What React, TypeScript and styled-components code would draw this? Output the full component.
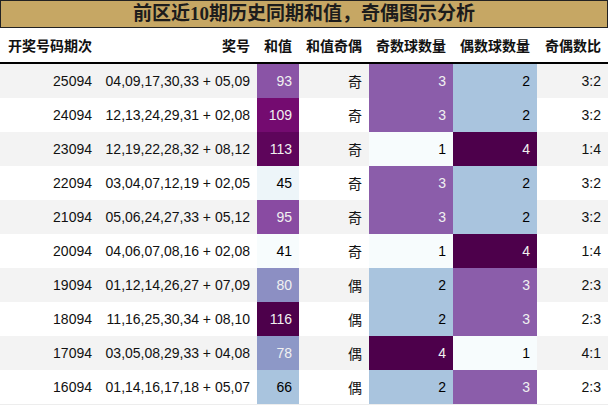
import React from 'react';
import styled, { createGlobalStyle } from 'styled-components';

interface Draw {
  issue: string;
  front: string;
  back: string;
  sum: number;
  odd: number;
  even: number;
}

const draws: Draw[] = [
  { issue: '25094', front: '04,09,17,30,33', back: '05,09', sum: 93, odd: 3, even: 2 },
  { issue: '24094', front: '12,13,24,29,31', back: '02,08', sum: 109, odd: 3, even: 2 },
  { issue: '23094', front: '12,19,22,28,32', back: '08,12', sum: 113, odd: 1, even: 4 },
  { issue: '22094', front: '03,04,07,12,19', back: '02,05', sum: 45, odd: 3, even: 2 },
  { issue: '21094', front: '05,06,24,27,33', back: '05,12', sum: 95, odd: 3, even: 2 },
  { issue: '20094', front: '04,06,07,08,16', back: '02,08', sum: 41, odd: 1, even: 4 },
  { issue: '19094', front: '01,12,14,26,27', back: '07,09', sum: 80, odd: 2, even: 3 },
  { issue: '18094', front: '11,16,25,30,34', back: '08,10', sum: 116, odd: 2, even: 3 },
  { issue: '17094', front: '03,05,08,29,33', back: '04,08', sum: 78, odd: 4, even: 1 },
  { issue: '16094', front: '01,14,16,17,18', back: '05,07', sum: 66, odd: 2, even: 3 },
];

// BuPu colour map stops
const BUPU = ['#f7fcfd', '#e0ecf4', '#bfd3e6', '#9ebcda', '#8c96c6', '#8c6bb1', '#88419d', '#810f7c', '#4d004b'];

const hexToRgb = (h: string) => [1, 3, 5].map((i) => parseInt(h.slice(i, i + 2), 16));

const bupu = (t: number) => {
  const x = Math.min(1, Math.max(0, t)) * (BUPU.length - 1);
  const i = Math.min(BUPU.length - 2, Math.floor(x));
  const f = x - i;
  const a = hexToRgb(BUPU[i]);
  const b = hexToRgb(BUPU[i + 1]);
  return a.map((v, k) => Math.round(v + (b[k] - v) * f));
};

const luminance = (rgb: number[]) => {
  const [r, g, b] = rgb.map((v) => {
    const c = v / 255;
    return c <= 0.03928 ? c / 12.92 : ((c + 0.055) / 1.055) ** 2.4;
  });
  return 0.2126 * r + 0.7152 * g + 0.0722 * b;
};

const gradient = (value: number, min: number, max: number) => {
  const rgb = bupu((value - min) / (max - min));
  return {
    bg: `rgb(${rgb.join(',')})`,
    fg: luminance(rgb) < 0.408 ? '#f1f1f1' : '#000000',
  };
};

const range = (list: number[]) => [Math.min(...list), Math.max(...list)];

export default function App() {
  const [sumMin, sumMax] = range(draws.map((d) => d.sum));
  const [oddMin, oddMax] = range(draws.map((d) => d.odd));
  const [evenMin, evenMax] = range(draws.map((d) => d.even));

  return (
    <>
      <GlobalStyle />
      <S.Wrap>
        <S.Title>前区近10期历史同期和值，奇偶图示分析</S.Title>
        <S.HeadRow>
          <S.HeadCell $left>开奖号码期次</S.HeadCell>
          <S.HeadCell>奖号</S.HeadCell>
          <S.HeadCell>和值</S.HeadCell>
          <S.HeadCell>和值奇偶</S.HeadCell>
          <S.HeadCell>奇数球数量</S.HeadCell>
          <S.HeadCell>偶数球数量</S.HeadCell>
          <S.HeadCell>奇偶数比</S.HeadCell>
        </S.HeadRow>
        {draws.map((d, index) => {
          const sum = gradient(d.sum, sumMin, sumMax);
          const odd = gradient(d.odd, oddMin, oddMax);
          const even = gradient(d.even, evenMin, evenMax);
          return (
            <S.Row key={d.issue} $striped={index % 2 === 0}>
              <S.Cell>{d.issue}</S.Cell>
              <S.Cell>
                {d.front} + {d.back}
              </S.Cell>
              <S.Cell $bg={sum.bg} $fg={sum.fg}>
                {d.sum}
              </S.Cell>
              <S.Cell>{d.sum % 2 === 1 ? '奇' : '偶'}</S.Cell>
              <S.Cell $bg={odd.bg} $fg={odd.fg}>
                {d.odd}
              </S.Cell>
              <S.Cell $bg={even.bg} $fg={even.fg}>
                {d.even}
              </S.Cell>
              <S.Cell>
                {d.odd}:{d.even}
              </S.Cell>
            </S.Row>
          );
        })}
      </S.Wrap>
    </>
  );
}

const GlobalStyle = createGlobalStyle`
  body {
    margin: 0;
    background: #ffffff;
  }
`;

const COLUMNS = '99px 158px 42px 70px 84px 84px 71px';

const S = {
  Wrap: styled.div`
    width: 608px;
    font-family: 'Liberation Sans', 'Noto Sans CJK SC', sans-serif;
    color: #111;
    border-bottom: 1px solid #ededed;
  `,
  Title: styled.div`
    height: 28px;
    box-sizing: border-box;
    border: 1px solid #222;
    background: #c6a764;
    color: #1c1c1c;
    font-family: 'Liberation Serif', 'Noto Sans CJK SC', serif;
    font-weight: bold;
    font-size: 19px;
    line-height: 26px;
    text-align: center;
  `,
  HeadRow: styled.div`
    display: grid;
    grid-template-columns: ${COLUMNS};
    height: 36px;
    box-sizing: border-box;
    border-bottom: 2px solid #000;
  `,
  HeadCell: styled.div<{ $left?: boolean }>`
    display: flex;
    align-items: center;
    justify-content: ${(p) => (p.$left ? 'flex-start' : 'flex-end')};
    padding: 0 7px 0 8px;
    font-size: 14px;
    font-weight: bold;
    color: #111;
    white-space: nowrap;
  `,
  Row: styled.div<{ $striped: boolean }>`
    display: grid;
    grid-template-columns: ${COLUMNS};
    height: 34px;
    background: ${(p) => (p.$striped ? '#f3f3f3' : '#ffffff')};
  `,
  Cell: styled.div<{ $bg?: string; $fg?: string }>`
    display: flex;
    align-items: center;
    justify-content: flex-end;
    padding: 0 7px;
    font-size: 14px;
    white-space: nowrap;
    background: ${(p) => p.$bg || 'transparent'};
    color: ${(p) => p.$fg || '#111'};
  `,
};
